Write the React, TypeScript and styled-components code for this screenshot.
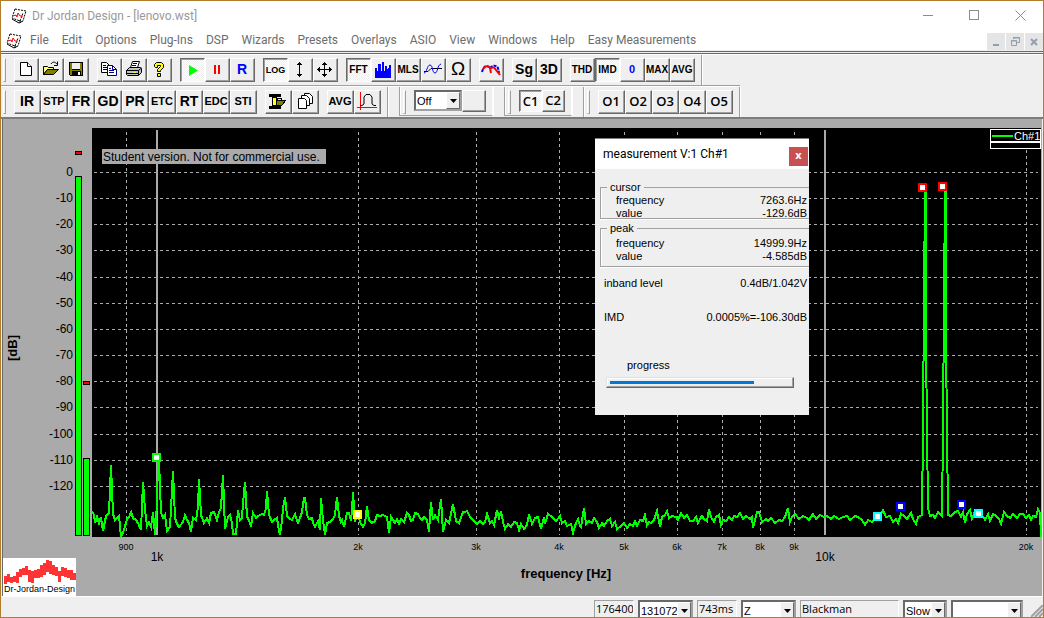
import React from "react";
import styled, { createGlobalStyle, css } from "styled-components";

const GlobalStyle = createGlobalStyle`
  * {
    box-sizing: border-box;
  }

  body {
    margin: 0;
    font-family: Roboto, "Open Sans", sans-serif;
    font-size: 12px;
    background: #efefef;
  }
`;

/* ---------- icons ---------- */

const AppIcon = () => (
  <svg width="16" height="16" viewBox="0 0 16 16" fill="none" aria-hidden="true">
    <path d="M4 1 L15 3 L12 13 L8 15 L1 11 Z" fill="#fff" />
    <path d="M4 1 L15 3 L12 13" stroke="#000" strokeDasharray="2 1" />
    <path d="M4 1 L1 10 L9 13 L12 5" stroke="#000" strokeDasharray="2 1" />
    <path d="M1 11 L8 15 L12 13 M9 12 V15" stroke="#000" />
    <path d="M2 8 L5 7 L6 9 L7 5 L9 8 L12 8" stroke="#f00" />
  </svg>
);

const NewIcon = () => (
  <svg width="18" height="18" viewBox="0 0 18 18" fill="#fff" stroke="#000">
    <path d="M3.500 2.500 H10.500 L14.500 6.500 V15.500 H3.500 Z" />
    <path d="M10.500 2.500 V6.500 H14.500" />
  </svg>
);

const OpenIcon = () => (
  <svg width="18" height="18" viewBox="0 0 18 18" stroke="#000">
    <path d="M1.500 14.500 V6.500 H5.500 L6.500 7.500 H11.500 V9.500 H5.500 Z" fill="#ffff66" />
    <path d="M1.500 14.500 L5.500 9.500 H16.500 L11.500 14.500 Z" fill="#808000" />
    <path d="M9 4 C11 1 13 2 15 4 M15.500 1.500 V5.500 H12" fill="none" />
  </svg>
);

const SaveIcon = () => (
  <svg width="18" height="18" viewBox="0 0 18 18" shapeRendering="crispEdges">
    <path d="M2 2 H16 V16 H3 L2 15 Z" fill="#000" />
    <path d="M3 3 H5 V10 H13 V3 H15 V15 H3 Z" fill="#808000" />
    <rect x="5" y="3" width="8" height="6" fill="#efefef" />
    <rect x="5" y="11" width="9" height="5" fill="#000" />
    <rect x="11" y="12" width="2" height="3" fill="#fff" />
  </svg>
);

const CopyIcon = () => (
  <svg width="18" height="18" viewBox="0 0 18 18" fill="#fff">
    <path d="M1.500 2.500 H6.500 L9.500 5.500 V12.500 H1.500 Z" stroke="#000" />
    <path d="M3 5.500 H6 M3 7.500 H7 M3 9.500 H7" stroke="#000" />
    <path d="M7.500 5.500 H12.500 L16.500 9.500 V15.500 H7.500 Z" stroke="#000080" />
    <path d="M12.500 5.500 V9.500 H16.500 M9 8.500 H11 M9 10.500 H14 M9 12.500 H14" stroke="#000080" fill="none" />
  </svg>
);

const PrintIcon = () => (
  <svg width="18" height="18" viewBox="0 0 18 18" stroke="#000">
    <path d="M5.500 7.500 L7.500 1.500 H14.500 L12.500 7.500" fill="#fff" />
    <path d="M8 3.500 H12 M7 5.500 H11" />
    <path d="M1.500 10.500 L4.500 7.500 H15.500 L16.500 8.500 V12.500 L13.500 15.500 H2.500 L1.500 14.500 Z" fill="#c0c0c0" />
    <path d="M1.500 10.500 H13.500 L16.500 8 M13.500 10.500 V15.500 M2 13.500 H13" fill="none" />
    <rect x="8" y="12" width="3" height="1" fill="#ffff00" stroke="none" />
  </svg>
);

const HelpIcon = () => (
  <svg width="18" height="18" viewBox="0 0 18 18" fill="#ffff00" stroke="#000">
    <path d="M4.500 6.500 V4.500 L6.500 2.500 H11.500 L13.500 4.500 V7.500 L10.500 10.500 V11.500 H7.500 V9.500 L10.500 6.500 V5.500 H7.500 V7.500 H5.500 Z" />
    <path d="M7.500 13.500 H10.500 V16.500 H7.500 Z" />
  </svg>
);

const PlayIcon = () => (
  <svg width="18" height="18" viewBox="0 0 18 18">
    <path d="M5 4 L14 9.500 L5 15 Z" fill="#00ff00" />
  </svg>
);

const PauseIcon = () => (
  <svg width="18" height="18" viewBox="0 0 18 18" fill="#ff0000">
    <rect x="6" y="5" width="2" height="9" />
    <rect x="10" y="5" width="2" height="9" />
  </svg>
);

const ZoomVertIcon = () => (
  <svg width="18" height="18" viewBox="0 0 18 18" fill="none" stroke="#000">
    <path d="M8.500 2 V17 M6 5 L8.500 2.500 L11 5 M6 14 L8.500 16.500 L11 14" />
    <path d="M7 4.500 H10 M7 14.500 H10" />
  </svg>
);

const MoveIcon = () => (
  <svg width="18" height="18" viewBox="0 0 18 18" fill="none" stroke="#000">
    <path d="M8.500 2.500 V17 M1 9.500 H16" />
    <path d="M6 5 L8.500 2.500 L11 5 M6 14 L8.500 16.500 L11 14 M4 7 L1.500 9.500 L4 12 M13 7 L15.500 9.500 L13 12" />
    <path d="M7 4.500 H10 M7 14.500 H10 M3.500 8 V11 M13.500 8 V11" />
  </svg>
);

const BarsIcon = () => (
  <svg width="18" height="18" viewBox="0 0 18 18" fill="#0000ff" shapeRendering="crispEdges">
    <path d="M1 18 V8 H3 V11 H4 V4 H7 V11 H8 V2 H10 V11 H11 V6 H13 V9 H14 V8 H15 V5 H17 V18 Z" />
  </svg>
);

const WaveIcon = () => (
  <svg width="20" height="18" viewBox="0 0 20 18" fill="none">
    <path d="M1 11.500 H5 L8 8.500 H19" stroke="#000" />
    <path d="M1 13 C4 13 4 5 7 5 C10 5 9 13 12 13 C15 13 14 5 18 4" stroke="#0000ff" />
  </svg>
);

const OverlayIcon = () => (
  <svg width="20" height="18" viewBox="0 0 20 18" fill="none" strokeWidth="2">
    <path d="M1 12 C3 5 6 5 9 8 C12 5 15 5 17 8 L18 13" stroke="#0000ff" strokeDasharray="3 1" />
    <path d="M2 9 C5 5 8 6 9 8 L10 13 M9 9 C12 6 14 8 15 10 L19 15" stroke="#ff0000" />
  </svg>
);

const PressIcon = () => (
  <svg width="20" height="18" viewBox="0 0 20 18" shapeRendering="crispEdges">
    <path d="M1 2 H13 V5 H9 V14 H13 V17 H1 V14 H4 V5 H1 Z" fill="#000" />
    <path d="M9 6 H13 V8 H9 Z" fill="#ffff33" stroke="#000" />
    <path d="M5 6 H8 V13 H5 Z" fill="#ffff33" />
    <path d="M8 8 H18 L14 13 H8 Z" fill="#808000" stroke="#000" />
  </svg>
);

const CascadeIcon = () => (
  <svg width="18" height="18" viewBox="0 0 18 18" fill="#fff" stroke="#000">
    <path d="M8.500 1.500 H13.500 L16.500 4.500 V11.500 H8.500 Z" />
    <path d="M5.500 3.500 H10.500 L13.500 6.500 V13.500 H5.500 Z" />
    <path d="M2.500 6.500 H8.500 L10.500 8.500 V16.500 H2.500 Z" />
  </svg>
);

const WindowIcon = () => (
  <svg width="20" height="20" viewBox="0 0 20 20" fill="none">
    <path d="M3.500 1 V19 M0 16.500 H20" stroke="#ff0000" />
    <path d="M3 14.500 H5 L7 13 V6 L9 3.500 H13 L15 6 V13 L17 14.500 H19" stroke="#000" />
  </svg>
);

const ArrowIcon = () => (
  <svg width="7" height="4" viewBox="0 0 7 4" aria-hidden="true">
    <path d="M0 0 H7 L3.500 4 Z" fill="#000" />
  </svg>
);

/* ---------- toolbar data ---------- */

type TextSize = "large" | "medium" | "compact" | "small" | "symbol";

interface Tool {
  name: string;
  text?: string;
  icon?: React.ReactNode;
  size?: TextSize;
  color?: string;
  pressed?: boolean;
}

const mainTools: Tool[][] = [
  [
    { name: "New", icon: <NewIcon /> },
    { name: "Open", icon: <OpenIcon /> },
    { name: "Save", icon: <SaveIcon /> },
  ],
  [
    { name: "Copy", icon: <CopyIcon /> },
    { name: "Print", icon: <PrintIcon /> },
    { name: "Help", icon: <HelpIcon /> },
  ],
  [
    { name: "Play", icon: <PlayIcon />, pressed: true },
    { name: "Pause", icon: <PauseIcon /> },
    { name: "Record", text: "R", size: "large", color: "#0000ff" },
  ],
  [
    { name: "Log", text: "LOG", size: "small", pressed: true },
    { name: "Zoom vertical", icon: <ZoomVertIcon /> },
    { name: "Move", icon: <MoveIcon /> },
  ],
  [
    { name: "FFT", text: "FFT", size: "compact", pressed: true },
    { name: "Spectrum", icon: <BarsIcon /> },
    { name: "MLS", text: "MLS", size: "compact" },
    { name: "Scope", icon: <WaveIcon /> },
    { name: "Impedance", text: "Ω", size: "symbol" },
  ],
  [{ name: "Overlays", icon: <OverlayIcon /> }],
  [
    { name: "Spectrogram", text: "Sg", size: "large" },
    { name: "3D", text: "3D", size: "large" },
  ],
  [
    { name: "THD", text: "THD", size: "compact" },
    { name: "IMD", text: "IMD", size: "compact", pressed: true },
    { name: "Zero", text: "0", size: "medium", color: "#0000ff" },
    { name: "MAX", text: "MAX", size: "compact" },
    { name: "AVG", text: "AVG", size: "compact" },
  ],
];

const pluginTools: Tool[][] = [
  [
    { name: "IR", text: "IR", size: "large" },
    { name: "STP", text: "STP", size: "medium" },
    { name: "FR", text: "FR", size: "large" },
    { name: "GD", text: "GD", size: "large" },
    { name: "PR", text: "PR", size: "large" },
    { name: "ETC", text: "ETC", size: "medium" },
    { name: "RT", text: "RT", size: "large" },
    { name: "EDC", text: "EDC", size: "medium" },
    { name: "STI", text: "STI", size: "medium" },
  ],
  [
    { name: "Compress", icon: <PressIcon /> },
    { name: "Cascade", icon: <CascadeIcon /> },
  ],
  [
    { name: "Average", text: "AVG", size: "medium" },
    { name: "Window", icon: <WindowIcon /> },
  ],
];

const channelTools: Tool[][] = [
  [
    { name: "C1", text: "C1", pressed: true },
    { name: "C2", text: "C2" },
  ],
];

const overlayTools: Tool[][] = [
  ["O1", "O2", "O3", "O4", "O5"].map((o) => ({ name: o, text: o })),
];

const menus = [
  "File", "Edit", "Options", "Plug-Ins", "DSP", "Wizards", "Presets",
  "Overlays", "ASIO", "View", "Windows", "Help", "Easy Measurements",
];

interface ToolGroupsProps {
  groups: Tool[][];
  width: number;
  soft?: boolean;
  short?: boolean;
}

const ToolGroups: React.FC<ToolGroupsProps> = ({ groups, width, soft, short }) => (
  <Groups>
    {groups.map((group, i) => (
      <Group key={i}>
        {group.map((tool) => (
          <ToolButton
            key={tool.name}
            type="button"
            aria-label={tool.name}
            aria-pressed={tool.pressed}
            $width={width}
            $size={tool.size}
            $color={tool.color}
            $pressed={tool.pressed}
            $soft={soft}
            $short={short}
          >
            {tool.text ?? tool.icon}
          </ToolButton>
        ))}
      </Group>
    ))}
  </Groups>
);

const ComboBox: React.FC<{ label: string; value: string; width: number }> = ({ label, value, width }) => (
  <Combo $width={width}>
    <select aria-label={label} defaultValue={value}>
      <option value={value}>{value}</option>
    </select>
    <ComboArrow>
      <ArrowIcon />
    </ComboArrow>
  </Combo>
);

/* ---------- spectrum chart ---------- */

const freqX = (hz: number) => Math.round(157 + 668 * Math.log10(hz / 1000));
const levelY = (db: number) => Math.round(172 - 2.615 * db);

const levels = Array.from({ length: 13 }, (_, i) => -10 * i);
const minorFreqs = [900, 2000, 3000, 4000, 5000, 6000, 7000, 8000, 9000, 20000];
const majorFreqs = [1000, 10000];
const freqLabel = (hz: number) => (hz < 1000 ? String(hz) : `${hz / 1000}k`);

const trace = `
  92,511 94,515 95,523 97,517 99,523 101,517 103,531 106,516 109,513 111,465 113,514 115,520
  117,518 119,516 121,537 124,530 127,519 129,517 131,512 133,518 136,520 138,523 141,530
  143,482 145,510 147,526 149,522 151,527 153,512 155,535 157,503 158,460 159,460 161,513
  163,518 165,515 167,531 170,527 173,471 175,518 177,524 179,527 183,522 185,515 187,520
  189,523 191,532 193,518 196,520 198,507 199,479 201,515 204,523 207,518 209,523 211,513
  214,512 217,520 219,512 221,508 223,475 225,529 228,517 230,515 232,523 233,534 236,534
  238,510 240,520 242,518 243,503 245,482 247,517 249,520 251,527 253,513 256,518 258,516
  262,514 264,515 266,508 267,491 269,515 272,522 274,520 277,518 278,525 280,535 282,520
  283,508 285,497 287,516 290,519 292,520 295,514 297,521 298,523 300,518 302,512 304,498
  305,498 307,515 309,519 312,518 313,523 315,527 318,521 320,530 321,498 323,520 325,535
  327,523 330,522 333,519 335,515 337,497 339,516 341,522 342,520 344,527 347,513 349,513
  351,521 352,510 353,492 355,522 358,512 360,522 363,527 365,523 367,506 369,520 372,523
  375,521 377,515 380,516 383,515 387,517 389,533 391,517 393,520 395,523 397,519 399,524
  401,519 404,522 407,513 409,515 411,521 413,520 415,513 418,514 420,518 422,520 424,517
  427,520 429,532 431,502 433,520 435,515 438,520 441,499 443,532 446,520 449,523 453,504
  456,521 459,523 463,512 465,512 467,511 470,517 473,520 477,524 480,521 483,524 485,522
  487,514 490,523 492,521 494,525 497,510 499,518 501,511 503,522 505,529 508,524 511,527
  514,522 517,523 519,530 521,524 524,529 527,525 529,514 532,524 535,518 538,517 541,529
  544,517 545,524 548,514 552,517 556,521 560,516 562,523 565,521 567,526 571,524 573,533
  576,523 578,519 580,526 581,527 584,508 586,524 589,521 592,523 594,518 597,522 599,528
  602,523 604,526 607,521 610,519 612,526 615,522 617,529 621,526 624,523 627,528 630,524
  633,526 635,521 637,526 640,520 643,521 645,515 647,525 649,522 651,523 654,520 657,511
  660,527 662,517 665,515 667,511 669,518 672,516 676,517 678,520 681,513 684,518 687,515
  690,521 693,521 696,517 698,523 700,519 702,516 704,519 707,521 709,509 711,517 714,522
  716,517 719,515 721,525 723,520 726,521 729,517 732,520 734,516 737,517 740,513 743,519
  746,516 750,519 752,517 753,528 757,512 759,512 762,522 766,519 768,521 771,518 775,523
  779,520 782,521 785,517 788,508 790,522 792,517 795,514 799,519 803,516 807,518 809,520
  813,514 816,519 820,515 824,517 827,516 831,519 834,516 839,519 843,517 847,516 850,520
  855,516 858,517 862,520 865,525 868,520 872,522 876,519 879,517 883,510 886,517 890,516
  893,522 896,519 898,523 901,514 904,516 907,519 911,513 913,519 916,524 918,517 922,515
  923,430 924,296 925,190 926,190 926,345 927,430 928,508 930,516 933,515 935,518 938,512
  942,516 943,430 944,300 945,190 946,190 946,345 947,430 948,515 951,516 955,512 958,511
  961,517 963,512 965,523 967,514 970,510 972,519 975,511 979,514 982,515 985,520 988,514
  990,521 993,514 996,516 999,519 1001,524 1004,512 1007,516 1010,518 1013,514 1017,518
  1020,514 1023,514 1026,518 1029,515 1031,520 1033,516 1036,517 1038,509 1040,513 1041,537
`;

const markers = [
  { x: 152, y: 453, color: "#00ff00" },
  { x: 353, y: 510, color: "#ffff00" },
  { x: 918, y: 183, color: "#ff0000" },
  { x: 938, y: 182, color: "#ff0000" },
  { x: 896, y: 502, color: "#0000ff" },
  { x: 957, y: 500, color: "#0000ff" },
  { x: 873, y: 512, color: "#00ffff" },
  { x: 974, y: 509, color: "#00ffff" },
];

const SpectrumChart = () => (
  <Chart viewBox="3 119 1038 477" preserveAspectRatio="xMinYMin meet" role="img" aria-label="Spectrum">
    <rect x="92" y="128" width="949" height="409" fill="#000" />

    <g stroke="#aaa" strokeDasharray="3 3" shapeRendering="crispEdges">
      {levels.map((db) => (
        <path key={db} d={`M94 ${levelY(db) + 0.5} H1038`} />
      ))}
      {minorFreqs.map((hz) => (
        <path key={hz} d={`M${freqX(hz) + 0.5} 132 V535`} />
      ))}
    </g>
    {majorFreqs.map((hz) => (
      <rect key={hz} x={freqX(hz) - 1} y="130" width="2" height="405" fill="#aaa" />
    ))}

    <polyline points={trace} fill="none" stroke="#00ff00" strokeWidth="2" shapeRendering="crispEdges" />
    {markers.map((m) => (
      <g key={m.x}>
        <rect x={m.x} y={m.y} width="9" height="9" fill={m.color} />
        <rect x={m.x + 2} y={m.y + 2} width="5" height="5" fill="#fff" />
      </g>
    ))}

    <rect x="102" y="149" width="224" height="15" fill="#aaa" />
    <ChartText x="103" y="161">Student version. Not for commercial use.</ChartText>

    <g fill="#000" stroke="#fff" shapeRendering="crispEdges">
      <rect x="990.500" y="129.500" width="50" height="12" />
      <rect x="990.500" y="142.500" width="50" height="6" />
    </g>
    <rect x="992" y="135" width="21" height="2" fill="#00ff00" />
    <ChartText x="1014" y="140" $size={11} $color="#fff">Ch#1</ChartText>

    {/* input level meters with peak hold */}
    <g fill="#00ff00" stroke="#000" shapeRendering="crispEdges">
      <rect x="75.500" y="176.500" width="6" height="359" />
      <rect x="83.500" y="458.500" width="6" height="77" />
      <rect x="75.500" y="151.500" width="6" height="3" fill="#ff0000" />
      <rect x="83.500" y="381.500" width="6" height="3" fill="#ff0000" />
    </g>

    {levels.map((db) => (
      <ChartText key={db} x="73" y={levelY(db) + 4} $anchor="end">{db}</ChartText>
    ))}
    {minorFreqs.map((hz) => (
      <ChartText key={hz} x={freqX(hz)} y="550" $size={9} $anchor="middle">{freqLabel(hz)}</ChartText>
    ))}
    {majorFreqs.map((hz) => (
      <ChartText key={hz} x={freqX(hz)} y="561" $anchor="middle">{freqLabel(hz)}</ChartText>
    ))}
    <ChartText x="566" y="578" $size={13} $anchor="middle" $bold>frequency [Hz]</ChartText>
    <ChartText x="17" y="348" $size={13} $anchor="middle" $bold transform="rotate(-90 17 348)">[dB]</ChartText>
  </Chart>
);

const logoBars = [
  [1, 18, 8], [4, 16, 8], [7, 19, 6], [10, 18, 6], [13, 14, 11], [16, 11, 8], [19, 10, 7],
  [22, 8, 9], [25, 12, 12], [28, 13, 12], [31, 12, 8], [34, 11, 9], [37, 7, 12], [40, 5, 12],
  [43, 2, 12], [46, 3, 13], [49, 7, 10], [52, 9, 9], [55, 13, 11], [58, 9, 9], [61, 10, 9],
  [64, 12, 8], [67, 12, 10], [70, 15, 7],
];

const Logo = () => (
  <LogoBox>
    <svg width="73" height="26" viewBox="0 0 73 26" fill="#ff3333" aria-hidden="true">
      {logoBars.map(([x, y, h]) => (
        <rect key={x} x={x} y={y} width="3" height={h} />
      ))}
    </svg>
    <span>Dr-Jordan-Design</span>
  </LogoBox>
);

/* ---------- measurement window ---------- */

const MeasurementWindow = () => (
  <Measurement role="dialog" aria-label="measurement V:1 Ch#1">
    <MeasurementTitle>
      measurement V:1 Ch#1
      <CloseButton type="button" aria-label="Close measurement">x</CloseButton>
    </MeasurementTitle>
    <ReadoutGroup $height={38}>
      <legend>cursor</legend>
      <Readout><span>frequency</span><span>7263.6Hz</span></Readout>
      <Readout><span>value</span><span>-129.6dB</span></Readout>
    </ReadoutGroup>
    <ReadoutGroup $height={45} $roomy>
      <legend>peak</legend>
      <Readout><span>frequency</span><span>14999.9Hz</span></Readout>
      <Readout><span>value</span><span>-4.585dB</span></Readout>
    </ReadoutGroup>
    <Totals>
      <Readout><span>inband level</span><span>0.4dB/1.042V</span></Readout>
      <Readout><span>IMD</span><span>0.0005%=-106.30dB</span></Readout>
    </Totals>
    <ProgressLabel htmlFor="progress">progress</ProgressLabel>
    <Progress id="progress" value={80} max={100} />
  </Measurement>
);

export default function App() {
  return (
    <Window>
      <GlobalStyle />
      <TitleBar>
        <AppIcon />
        <Title>Dr Jordan Design - [lenovo.wst]</Title>
        <WindowButton type="button" aria-label="Minimize">
          <svg width="11" height="11" viewBox="0 0 11 11"><path d="M0 5.500 H10" stroke="#8c8c8c" /></svg>
        </WindowButton>
        <WindowButton type="button" aria-label="Maximize">
          <svg width="11" height="11" viewBox="0 0 11 11"><rect x="0.500" y="0.500" width="9" height="9" fill="none" stroke="#8c8c8c" /></svg>
        </WindowButton>
        <WindowButton type="button" aria-label="Close">
          <svg width="11" height="11" viewBox="0 0 11 11"><path d="M0.500 0.500 L10.500 10.500 M10.500 0.500 L0.500 10.500" stroke="#8c8c8c" /></svg>
        </WindowButton>
      </TitleBar>

      <MenuBar>
        <AppIcon />
        <MenuList>
          {menus.map((menu) => (
            <MenuItem key={menu} type="button">{menu}</MenuItem>
          ))}
        </MenuList>
        <MdiButtons>
          <MdiButton type="button" aria-label="Minimize document">
            <svg width="8" height="8" viewBox="0 0 8 8"><rect x="1" y="6" width="6" height="2" fill="#8fa0b0" /></svg>
          </MdiButton>
          <MdiButton type="button" aria-label="Restore document">
            <svg width="9" height="9" viewBox="0 0 9 9" fill="none" stroke="#8fa0b0">
              <path d="M2.500 2 V0.500 H8.500 V5.500 H6 M2 1 H9 M0.500 3.500 H5.500 V8.500 H0.500 Z M0 4 H6" />
            </svg>
          </MdiButton>
          <MdiButton type="button" aria-label="Close document">
            <svg width="8" height="8" viewBox="0 0 8 8"><path d="M1 1 L7 7 M7 1 L1 7" stroke="#8fa0b0" strokeWidth="2" /></svg>
          </MdiButton>
        </MdiButtons>
      </MenuBar>

      <Toolbars>
        <ToolRow>
          <Band>
            <Gripper />
            <ToolGroups groups={mainTools} width={25} />
          </Band>
        </ToolRow>
        <ToolRow $ruled>
          <Band>
            <Gripper />
            <ToolGroups groups={pluginTools} width={27} />
          </Band>
          <Band $inner $boxed>
            <Gripper />
            <ComboBox label="Weighting" value="Off" width={48} />
            <ToolButton type="button" aria-label="Apply" $width={24} $short />
          </Band>
          <Band $inner $boxed>
            <Gripper />
            <ToolGroups groups={channelTools} width={23} soft short />
          </Band>
          <Band $inner>
            <Gripper />
            <ToolGroups groups={overlayTools} width={27} soft />
          </Band>
        </ToolRow>
      </Toolbars>

      <Workspace>
        <SpectrumChart />
        <Logo />
        <MeasurementWindow />
      </Workspace>

      <StatusBar>
        <StatusCell $width={40}>176400</StatusCell>
        <ComboBox label="FFT length" value="131072" width={55} />
        <StatusCell $width={40}>743ms</StatusCell>
        <ComboBox label="Filter" value="Z" width={55} />
        <StatusCell $width={99}>Blackman</StatusCell>
        <ComboBox label="Speed" value="Slow" width={44} />
        <ComboBox label="Preset" value="" width={72} />
        <svg width="12" height="12" viewBox="0 0 12 12" aria-hidden="true">
          <path d="M0 12 L12 0 M4 12 L12 4 M8 12 L12 8" stroke="#a0a0a0" strokeWidth="2" />
        </svg>
      </StatusBar>
    </Window>
  );
}

/* ---------- styles ---------- */

const Window = styled.div`
  display: flex;
  flex-direction: column;
  height: 100vh;
  min-height: 480px;
  border: 1px solid #b07d2b;
  background: #efefef;
  overflow: hidden;
`;

const TitleBar = styled.header`
  display: flex;
  align-items: center;
  flex: none;
  height: 32px;
  padding: 0 0 2px 10px;
  background: #fff;
`;

const Title = styled.h1`
  flex: 1;
  margin: 0 0 0 5px;
  font-size: 12px;
  font-weight: 400;
  color: #999;
`;

const WindowButton = styled.button`
  width: 46px;
  height: 30px;
  padding: 0;
  border: 0;
  background: transparent;
`;

const MenuBar = styled.nav`
  display: flex;
  flex: none;
  gap: 2px;
  height: 17px;
  padding-left: 5px;
  background: #fff;
`;

const MenuList = styled.div`
  display: flex;
  flex: 1;
`;

const MenuItem = styled.button`
  padding: 0 7px 2px 6px;
  border: 0;
  background: transparent;
  font: inherit;
  line-height: 15px;
  color: #6d6d6d;
  white-space: nowrap;
`;

const MdiButtons = styled.div`
  display: flex;
  gap: 1px;
`;

const MdiButton = styled.button`
  width: 18px;
  height: 17px;
  padding: 0;
  border: 0;
  background: #e5e5e5;
`;

const Toolbars = styled.div`
  flex: none;
  margin-top: 1px;
  border-top: 3px double #696969;
  border-bottom: 2px solid #7c7c7c;
  box-shadow: inset 0 1px #fff;
`;

const ToolRow = styled.div<{ $ruled?: boolean }>`
  display: flex;
  width: max-content;
  height: 31px;
  padding-top: 1px;

  ${({ $ruled }) =>
    $ruled &&
    css`
      height: 32px;
      border-top: 1px solid #a0a0a0;
      box-shadow: inset 0 1px #fff;
    `}
`;

const Band = styled.div<{ $inner?: boolean; $boxed?: boolean }>`
  display: flex;
  padding: 3px 6px 0 2px;
  border-right: 1px solid #a0a0a0;
  box-shadow: 1px 0 #fff;

  ${({ $inner }) =>
    $inner &&
    css`
      margin-left: 11px;
      padding-left: 3px;
      border-left: 1px solid #a0a0a0;
      box-shadow: 1px 0 #fff, inset 1px 0 #fff;
    `}

  ${({ $boxed }) =>
    $boxed &&
    css`
      margin-bottom: 1px;
      border-right-color: #fff;
      border-bottom: 1px solid #a0a0a0;
    `}
`;

const Gripper = styled.div`
  width: 3px;
  height: 24px;
  margin-right: 8px;
  border: 1px solid;
  border-color: #fff #a0a0a0 #a0a0a0 #fff;
`;

const Groups = styled.div`
  display: flex;
  gap: 8px;
`;

const Group = styled.div`
  display: flex;
`;

const textSizes = {
  large: css`font-size: 14px;`,
  medium: css`font-size: 11px;`,
  compact: css`font-size: 10px;`,
  small: css`font-size: 9px;`,
  symbol: css`
    font-size: 19px;
    font-weight: 400;
  `,
};

const ToolButton = styled.button<{
  $width: number;
  $size?: TextSize;
  $color?: string;
  $pressed?: boolean;
  $soft?: boolean;
  $short?: boolean;
}>`
  display: flex;
  align-items: center;
  justify-content: center;
  width: ${({ $width }) => $width}px;
  height: ${({ $short }) => ($short ? 22 : 24)}px;
  padding: 0 1px 2px 0;
  border: 1px solid;
  border-color: #fff #696969 #696969 #fff;
  background: #efefef;
  box-shadow: inset -1px -1px #a0a0a0;
  font-family: "Liberation Sans", Arial, sans-serif;
  font-weight: 700;
  color: ${({ $color }) => $color ?? "#000"};

  ${({ $size }) => $size && textSizes[$size]}

  ${({ $soft }) =>
    $soft &&
    css`
      font-family: "Open Sans", sans-serif;
      font-size: 13px;
      font-weight: 600;
    `}

  ${({ $pressed }) =>
    $pressed &&
    css`
      padding: 0 0 1px;
      border-color: #696969 #fff #fff #696969;
      background: repeating-conic-gradient(#fff 0 25%, #efefef 0 50%) 0 0 / 2px 2px;
      box-shadow: inset 1px 1px #a0a0a0;
    `}

  svg {
    flex: none;
  }
`;

const Combo = styled.span<{ $width: number }>`
  display: grid;
  flex: none;
  width: ${({ $width }) => $width}px;
  height: 21px;
  border: 2px solid;
  border-color: #696969 #a0a0a0 #a0a0a0 #696969;
  background: #fff;

  select {
    grid-area: 1 / 1;
    min-width: 0;
    padding: 0 14px 0 1px;
    border: 0;
    appearance: none;
    background: transparent;
    font-family: "Liberation Sans", Arial, sans-serif;
    font-size: 11px;
    color: #000;
  }
`;

const ComboArrow = styled.span`
  display: flex;
  grid-area: 1 / 1;
  align-items: center;
  justify-content: center;
  justify-self: end;
  width: 14px;
  border: 1px solid;
  border-color: #fff #696969 #696969 #fff;
  background: #efefef;
  pointer-events: none;
`;

const Workspace = styled.main`
  position: relative;
  flex: 1;
  min-height: 0;
  margin: 0 1px;
  border-left: 1px solid #696969;
  background: #aaa;
`;

const Chart = styled.svg`
  display: block;
  width: 100%;
  height: 100%;
`;

const ChartText = styled.text<{ $size?: number; $anchor?: string; $bold?: boolean; $color?: string }>`
  font-family: "Liberation Sans", Arial, sans-serif;
  font-size: ${({ $size }) => $size ?? 12}px;
  font-weight: ${({ $bold }) => ($bold ? 700 : 400)};
  text-anchor: ${({ $anchor }) => $anchor ?? "start"};
  fill: ${({ $color }) => $color ?? "#000"};
`;

const LogoBox = styled.div`
  position: absolute;
  left: 0;
  bottom: 0;
  display: flex;
  flex-direction: column;
  width: 73px;
  height: 38px;
  background: #fff;
  font-family: "Liberation Sans", Arial, sans-serif;
  font-size: 9px;
  line-height: 11px;
  text-align: center;
  white-space: nowrap;
`;

const Measurement = styled.section`
  position: absolute;
  left: 592px;
  top: 19px;
  display: flex;
  flex-direction: column;
  width: 214px;
  height: 277px;
  border-top: 1px solid #808080;
  background: #efefef;
  font-family: "Liberation Sans", Arial, sans-serif;
  font-size: 11px;
  line-height: 13px;
  overflow: hidden;
`;

const MeasurementTitle = styled.div`
  display: flex;
  align-items: center;
  justify-content: space-between;
  height: 30px;
  margin-bottom: 12px;
  padding: 0 1px 0 8px;
  background: #fff;
  font-family: Roboto, "Open Sans", sans-serif;
  font-size: 12px;
`;

const CloseButton = styled.button`
  width: 19px;
  height: 19px;
  margin-top: 4px;
  padding: 0 0 2px;
  border: 0;
  background: #c75050;
  font-family: "Open Sans", sans-serif;
  font-size: 11px;
  font-weight: 700;
  line-height: 16px;
  color: #fff;
`;

const ReadoutGroup = styled.fieldset<{ $height: number; $roomy?: boolean }>`
  height: ${({ $height }) => $height}px;
  min-width: 0;
  margin: 0 0 3px 5px;
  padding: ${({ $roomy }) => ($roomy ? 2 : 0)}px 2px 0 15px;
  border: 1px solid #a0a0a0;
  border-right: 0;
  box-shadow: inset 1px 0 #fff, 0 1px #fff;

  legend {
    margin-left: -9px;
    padding: 0 3px;
  }
`;

const Readout = styled.div`
  display: flex;
  justify-content: space-between;
`;

const Totals = styled.div`
  display: flex;
  flex-direction: column;
  gap: 21px;
  margin-top: 7px;
  padding: 0 2px 0 9px;
`;

const ProgressLabel = styled.label`
  margin: 35px 0 5px 32px;
`;

const Progress = styled.progress`
  display: block;
  width: 188px;
  height: 11px;
  margin-left: 11px;
  padding: 3px;
  border: 1px solid;
  border-color: #e0e0e0 #696969 #696969 #e0e0e0;
  box-shadow: inset -1px -1px #a0a0a0, inset 1px 1px #fff;
  appearance: none;
  background: #efefef;

  &::-webkit-progress-bar {
    background: transparent;
  }

  &::-webkit-progress-value {
    background: #0078d7;
  }
`;

const StatusBar = styled.footer`
  display: flex;
  align-items: flex-start;
  justify-content: flex-end;
  flex: none;
  gap: 4px;
  height: 21px;
  padding: 3px 0 0;
  border-top: 1px solid #fff;
  overflow: hidden;

  > svg {
    flex: none;
    margin: 5px 0 0 4px;
  }
`;

const StatusCell = styled.span<{ $width: number }>`
  flex: none;
  width: ${({ $width }) => $width}px;
  height: 18px;
  padding-left: 1px;
  border: 1px solid;
  border-color: #a0a0a0 #fff #fff #a0a0a0;
  font-family: "Open Sans", sans-serif;
  font-size: 11px;
  line-height: 16px;
  overflow: hidden;
`;
